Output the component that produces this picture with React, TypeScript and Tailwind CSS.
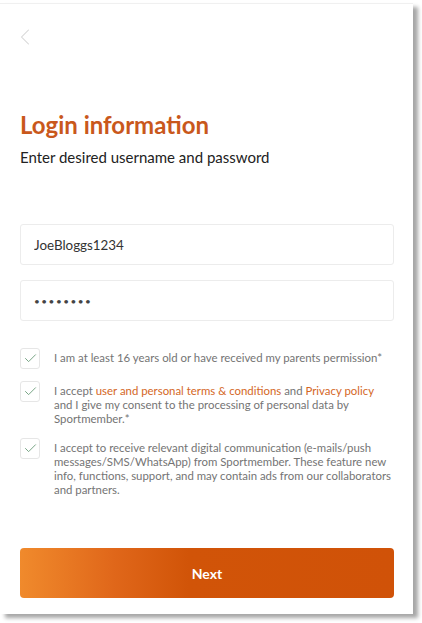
import { Check, ChevronLeft } from "lucide-react";

const font = { fontFamily: "Lato, 'Open Sans', sans-serif" };

function Consent({ children }: { children: React.ReactNode }) {
  return (
    <div className="flex items-start gap-[14px]">
      <div className="flex h-[21px] w-[20px] shrink-0 items-center justify-center rounded-[3px] border border-[#e6e6e6] bg-white">
        <Check className="h-[15px] w-[15px] text-[#6f9f7d]" strokeWidth={1.5} />
      </div>
      <p className="mt-[3px] w-[340px] text-[11.4px] leading-[14px] text-[#747474]">{children}</p>
    </div>
  );
}

export default function App() {
  return (
    <div className="h-[623px] w-[422px] overflow-hidden bg-white pt-[3px]" style={font}>
      <div className="flex h-[611px] w-[413px] flex-col border-t border-[#f0f0f0] bg-white px-[20px] shadow-[5px_4px_4px_rgba(0,0,0,0.35)]">
        {/* Back */}
        <div className="mt-[19px] h-[28px]">
          <ChevronLeft className="-ml-[9px] h-[28px] w-[28px] text-[#d4d4d4]" strokeWidth={0.9} />
        </div>

        {/* Header */}
        <h1 className="mt-[59px] text-[24px] font-bold leading-[29px] text-[#c9581c]">Login information</h1>
        <p className="mt-[9px] text-[15px] leading-[18px] text-[#222]">Enter desired username and password</p>

        {/* Inputs */}
        <div className="mt-[58px] flex w-[374px] flex-col gap-[15px]">
          <input
            type="text"
            defaultValue="JoeBloggs1234"
            className="h-[41px] rounded-[3px] border border-[#ececec] px-[13px] text-[13.4px] text-[#333] outline-none"
          />
          <input
            type="password"
            defaultValue="password"
            className="h-[41px] rounded-[3px] border border-[#ececec] px-[13px] text-[10px] tracking-[1.5px] text-[#444] outline-none"
          />
        </div>

        {/* Consents */}
        <div className="mt-[27px] flex w-[374px] flex-col gap-[12px]">
          <Consent>I am at least 16 years old or have received my parents permission*</Consent>
          <Consent>
            I accept <span className="text-[#d4671f]">user and personal terms &amp; conditions</span> and{" "}
            <span className="text-[#d4671f]">Privacy policy</span> and I give my consent to the processing of personal
            data by Sportmember.*
          </Consent>
          <Consent>
            I accept to receive relevant digital communication (e-mails/push messages/SMS/WhatsApp) from Sportmember.
            These feature new info, functions, support, and may contain ads from our collaborators and partners.
          </Consent>
        </div>

        {/* Next */}
        <button className="mt-auto mb-[16px] h-[50px] w-[374px] rounded-[4px] bg-[linear-gradient(90deg,#f08a2c_0%,#e0671a_25%,#d15408_45%,#d05208_100%)] text-[14px] font-bold text-white">
          Next
        </button>
      </div>
    </div>
  );
}
